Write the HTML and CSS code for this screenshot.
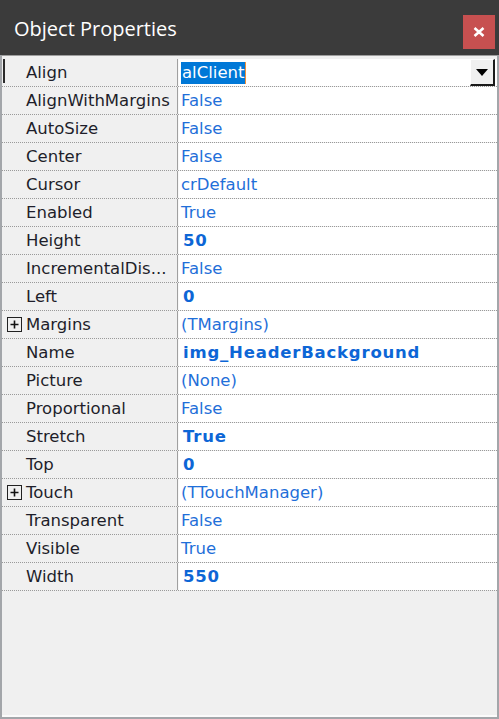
FILE: index.html
```html
<!DOCTYPE html>
<html>
<head>
<meta charset="utf-8">
<link rel="stylesheet" href="styles.css">
</head>
<body>
<div class="window">
  <div class="titlebar">
    <div class="title">Object Properties</div>
    <div class="close">
      <svg width="12" height="10" viewBox="0 0 12 10"><path d="M1.5 1 L10.5 9 M10.5 1 L1.5 9" stroke="#fff" stroke-width="2.6" fill="none"/></svg>
    </div>
  </div>
  <div class="content">
    <div class="grid">
      <div class="row">
        <div class="name"><span class="marker"></span>Align</div>
        <div class="value"><span class="sel">alClient</span><span class="caret"></span><span class="drop"><svg width="12" height="7" viewBox="0 0 12 7"><path d="M0 0 H12 L6 7 Z" fill="#000"/></svg></span></div>
      </div>
      <div class="row"><div class="name">AlignWithMargins</div><div class="value">False</div></div>
      <div class="row"><div class="name">AutoSize</div><div class="value">False</div></div>
      <div class="row"><div class="name">Center</div><div class="value">False</div></div>
      <div class="row"><div class="name">Cursor</div><div class="value">crDefault</div></div>
      <div class="row"><div class="name">Enabled</div><div class="value">True</div></div>
      <div class="row"><div class="name">Height</div><div class="value bold">50</div></div>
      <div class="row"><div class="name">IncrementalDis...</div><div class="value">False</div></div>
      <div class="row"><div class="name">Left</div><div class="value bold">0</div></div>
      <div class="row"><div class="name"><span class="plus"><svg width="15" height="15" viewBox="0 0 15 15"><rect x="0.5" y="0.5" width="14" height="14" fill="#f0f0f0" stroke="#222"/><path d="M3.5 7.5 H11.5 M7.5 3.5 V11.5" stroke="#111" stroke-width="1.6"/></svg></span>Margins</div><div class="value">(TMargins)</div></div>
      <div class="row"><div class="name">Name</div><div class="value bold">img_HeaderBackground</div></div>
      <div class="row"><div class="name">Picture</div><div class="value">(None)</div></div>
      <div class="row"><div class="name">Proportional</div><div class="value">False</div></div>
      <div class="row"><div class="name">Stretch</div><div class="value bold">True</div></div>
      <div class="row"><div class="name">Top</div><div class="value bold">0</div></div>
      <div class="row"><div class="name"><span class="plus"><svg width="15" height="15" viewBox="0 0 15 15"><rect x="0.5" y="0.5" width="14" height="14" fill="#f0f0f0" stroke="#222"/><path d="M3.5 7.5 H11.5 M7.5 3.5 V11.5" stroke="#111" stroke-width="1.6"/></svg></span>Touch</div><div class="value">(TTouchManager)</div></div>
      <div class="row"><div class="name">Transparent</div><div class="value">False</div></div>
      <div class="row"><div class="name">Visible</div><div class="value">True</div></div>
      <div class="row"><div class="name">Width</div><div class="value bold">550</div></div>
    </div>
  </div>
</div>
</body>
</html>
```
FILE: styles.css
```css
html, body {
  margin: 0;
  padding: 0;
}
body {
  width: 499px;
  height: 719px;
  overflow: hidden;
  background: #f0f0f0;
}
.window {
  width: 499px;
  height: 719px;
  display: flex;
  flex-direction: column;
}
.titlebar {
  height: 55px;
  flex: none;
  background: #3b3b3b;
  display: flex;
  align-items: flex-start;
}
.title {
  font-family: "Open Sans", "Noto Sans", sans-serif;
  font-size: 20px;
  color: #ffffff;
  padding-left: 14px;
  padding-top: 16px;
  line-height: 26px;
}
.close {
  margin-left: auto;
  margin-top: 15px;
  margin-right: 4px;
  width: 32px;
  height: 34px;
  background: #c75050;
  display: flex;
  align-items: center;
  justify-content: center;
}
.close svg {
  display: block;
}
.content {
  flex: 1;
  background: #f0f0f0;
  border-left: 2px solid #a3a6aa;
  border-right: 2px solid #a3a6aa;
  border-bottom: 2px solid #a3a6aa;
  border-top: 1px solid #9e9e9e;
  padding-top: 3px;
  box-shadow: inset 0 -2px 0 #fbfbfb;
}
.grid {
  display: flex;
  flex-direction: column;
}
.row {
  display: flex;
  height: 27px;
  border-bottom: 1px dotted #9a9a9a;
  font-family: "DejaVu Sans", "Liberation Sans", sans-serif;
  font-size: 16.5px;
}
.name {
  width: 151px;
  flex: none;
  padding-left: 24px;
  border-right: 1px solid #a0a0a0;
  background: #f0f0f0;
  color: #1e1e2a;
  display: flex;
  align-items: center;
  position: relative;
  white-space: nowrap;
  overflow: hidden;
}
.value {
  flex: 1;
  background: #ffffff;
  border-left: 1px solid #f8f8f8;
  padding-left: 2px;
  color: #1f6fd9;
  display: flex;
  align-items: center;
  white-space: nowrap;
}
.value.bold {
  font-weight: bold;
  letter-spacing: 0.8px;
  color: #0d66d6;
  padding-left: 4px;
}
.marker {
  position: absolute;
  left: 1px;
  top: 0;
  width: 2px;
  height: 24px;
  background: #2a2a2a;
}
.plus {
  position: absolute;
  left: 5px;
  top: 6px;
  width: 15px;
  height: 15px;
}
.plus svg {
  display: block;
}
.sel {
  background: #0078d7;
  color: #ffffff;
  height: 22px;
  line-height: 22px;
  padding: 0 1px;
  margin-left: 0;
}
.caret {
  width: 1px;
  height: 22px;
  background: #f0903a;
}
.drop {
  margin-left: auto;
  margin-right: 2px;
  align-self: flex-start;
  width: 22px;
  height: 24px;
  background: #f0f0f0;
  border-top: 1px solid #ffffff;
  border-left: 1px solid #ffffff;
  border-right: 2px solid #1a1a1a;
  border-bottom: 2px solid #1a1a1a;
  display: flex;
  align-items: center;
  justify-content: center;
}
.drop svg {
  display: block;
}
```
